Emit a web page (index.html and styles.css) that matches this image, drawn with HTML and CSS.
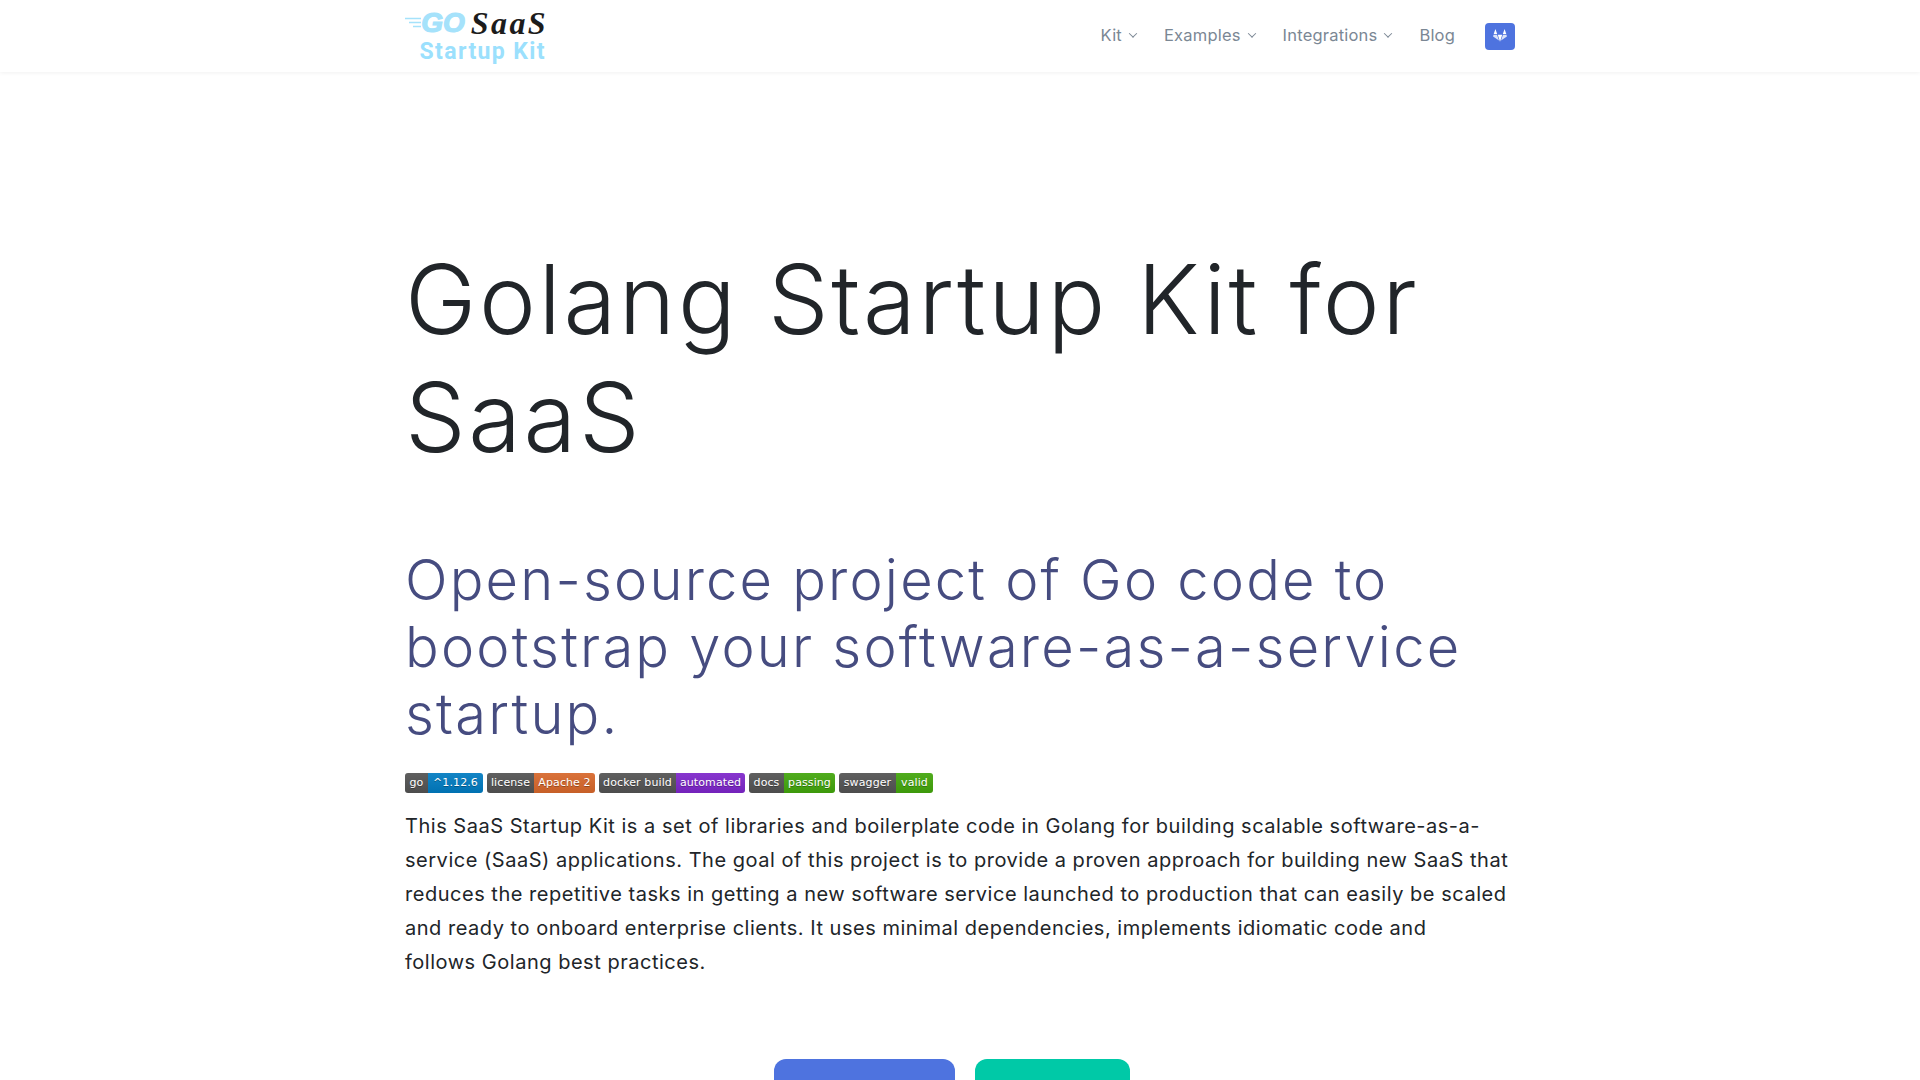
FILE: index.html
```html
<!DOCTYPE html>
<html lang="en">
<head>
    <meta charset="UTF-8">
    <meta name="viewport" content="width=device-width, initial-scale=1.0">
    <title>Golang Startup Kit for SaaS</title>
    <link rel="stylesheet" href="styles.css">
</head>
<body>

    <!-- Top navigation -->
    <header class="navbar">
        <div class="container navbar-inner">
            <a class="logo" href="#">
                <span class="logo-top">
                    <svg class="logo-lines" width="16" height="12" viewBox="0 0 16 12">
                        <path d="M0 1.5h16M4 5.5h12M8 9.5h8" stroke="#a5e2fb" stroke-width="1.5" fill="none"/>
                    </svg>
                    <span class="logo-go">GO</span>
                    <span class="logo-saas">SaaS</span>
                </span>
                <span class="logo-kit">Startup Kit</span>
            </a>
            <nav class="nav-links">
                <a href="#">Kit <span class="caret"></span></a>
                <a href="#">Examples <span class="caret"></span></a>
                <a href="#">Integrations <span class="caret"></span></a>
                <a href="#">Blog</a>
                <a class="gitlab-btn" href="#" aria-label="GitLab">
                    <svg width="14" height="13" viewBox="0 0 14 13">
                        <path d="M7 12.8 4.8 5.8h4.4z" fill="#fff"/>
                        <path d="M6 11.6 4 5.8H.5l-.4 1.6zM8 11.6l2-5.8h3.5l.4 1.6z" fill="#fff" opacity=".8"/>
                        <path d="M2.4 0 4.2 5.1H.7zM11.6 0l1.7 5.1H9.8z" fill="#fff"/>
                    </svg>
                </a>
            </nav>
        </div>
    </header>

    <main class="container hero">
        <h1>Golang Startup Kit for SaaS</h1>
        <h2>Open-source project of Go code to bootstrap your software-as-a-service startup.</h2>

        <!-- Badges -->
        <div class="badges">
            <span class="badge badge-go"><span class="badge-key">go</span><span class="badge-val val-blue">^1.12.6</span></span>
            <span class="badge badge-license"><span class="badge-key">license</span><span class="badge-val val-orange">Apache 2</span></span>
            <span class="badge badge-docker"><span class="badge-key">docker build</span><span class="badge-val val-purple">automated</span></span>
            <span class="badge badge-docs"><span class="badge-key">docs</span><span class="badge-val val-green">passing</span></span>
            <span class="badge badge-swagger"><span class="badge-key">swagger</span><span class="badge-val val-green">valid</span></span>
        </div>

        <p class="intro">This SaaS Startup Kit is a set of libraries and boilerplate code in Golang for building scalable software-as-a-service (SaaS) applications. The goal of this project is to provide a proven approach for building new SaaS that reduces the repetitive tasks in getting a new software service launched to production that can easily be scaled and ready to onboard enterprise clients. It uses minimal dependencies, implements idiomatic code and<br>follows Golang best practices.</p>

        <div class="actions">
            <a class="btn btn-blue" href="#"></a>
            <a class="btn btn-green" href="#"></a>
        </div>
    </main>

</body>
</html>
```

FILE: styles.css
```css
html, body {
    height: 100%;
    overflow: hidden;
}

body {
    background: #fff;
    font-family: "Inter", "Open Sans", sans-serif;
    margin: 0;
    padding: 0;
    color: #212529;
}

a {
    color: inherit;
    text-decoration: none;
}

.container {
    width: 1110px;
    margin: 0 auto;
}

/* Navbar */
.navbar {
    height: 72px;
    box-shadow: 0 1px 4px rgba(0, 0, 0, 0.06);
}

.navbar-inner {
    display: flex;
    align-items: center;
    justify-content: space-between;
    height: 100%;
}

.logo {
    display: flex;
    flex-direction: column;
    align-items: flex-end;
    gap: 2px;
    width: 143px;
}

.logo-top {
    display: flex;
    align-items: center;
    height: 30px;
    line-height: 30px;
}

.logo-go {
    font-family: "Liberation Sans", sans-serif;
    font-style: italic;
    font-weight: 700;
    font-size: 28px;
    -webkit-text-stroke: 1.2px #a5e2fb;
    color: #a5e2fb;
    margin-right: 6px;
}

.logo-saas {
    font-family: "Liberation Serif", serif;
    font-style: italic;
    font-weight: 700;
    font-size: 32px;
    letter-spacing: 2.4px;
    color: #1c1c1c;
}

.logo-kit {
    font-family: "Roboto", sans-serif;
    font-weight: 700;
    font-size: 23px;
    line-height: 24px;
    letter-spacing: 1.4px;
    color: #9be0fd;
    margin-right: 2px;
}

.nav-links {
    display: flex;
    align-items: center;
    font-size: 16.5px;
    letter-spacing: 0.2px;
    color: #7b8794;
}

.nav-links a {
    display: flex;
    align-items: center;
    margin-left: 28px;
    padding-bottom: 2px;
}

.caret {
    width: 5px;
    height: 5px;
    margin-left: 8px;
    border-right: 1.5px solid #7b8794;
    border-bottom: 1.5px solid #7b8794;
    transform: rotate(45deg) translate(-1px, -1px);
}

.nav-links .gitlab-btn {
    justify-content: center;
    width: 30px;
    height: 27px;
    margin-left: 30px;
    padding-bottom: 0;
    background: #4e73df;
    border-radius: 4px;
}

.gitlab-btn svg {
    margin-bottom: 2px;
}

/* Hero */
.hero {
    padding-top: 168px;
}

h1 {
    margin: 0;
    font-weight: 300;
    font-size: 96px;
    line-height: 118px;
    letter-spacing: 2.6px;
    color: #212529;
}

h2 {
    margin: 71px 0 0;
    font-weight: 300;
    font-size: 56px;
    line-height: 67px;
    letter-spacing: 2.2px;
    color: #464c80;
}

.badges {
    display: flex;
    gap: 4px;
    margin-top: 25px;
    font-family: "DejaVu Sans", sans-serif;
    font-size: 11px;
    letter-spacing: 0.1px;
}

.badge {
    display: flex;
    height: 20px;
    line-height: 20px;
    border-radius: 3px;
    overflow: hidden;
    color: #fff;
    text-shadow: 0 1px 0 rgba(1, 1, 1, 0.3);
}

.badge-key,
.badge-val {
    text-align: center;
    white-space: nowrap;
    background-image: linear-gradient(rgba(187, 187, 187, 0.1), rgba(0, 0, 0, 0.1));
}

.badge-key {
    background-color: #555;
}

.val-blue { background-color: #007ec6; }
.val-orange { background-color: #dd6a2c; }
.val-purple { background-color: #8127d0; }
.val-green { background-color: #44aa0c; }

/* shields keep their own widths */
.badge-go .badge-key { width: 23px; }
.badge-go .badge-val { width: 55px; }
.badge-license .badge-key { width: 47px; }
.badge-license .badge-val { width: 61px; }
.badge-docker .badge-key { width: 77px; }
.badge-docker .badge-val { width: 69px; }
.badge-docs .badge-key { width: 35px; }
.badge-docs .badge-val { width: 51px; }
.badge-swagger .badge-key { width: 57px; }
.badge-swagger .badge-val { width: 37px; }

.intro {
    margin: 16px 0 0;
    font-size: 20px;
    line-height: 34px;
    letter-spacing: 0.52px;
    color: #212529;
}

.actions {
    display: flex;
    justify-content: center;
    gap: 20px;
    padding-right: 16px;
    margin-top: 80px;
}

.btn {
    display: block;
    height: 60px;
    border-radius: 12px;
}

.btn-blue {
    width: 181px;
    background: #4e73df;
}

.btn-green {
    width: 155px;
    background: #00c9a7;
}
```
